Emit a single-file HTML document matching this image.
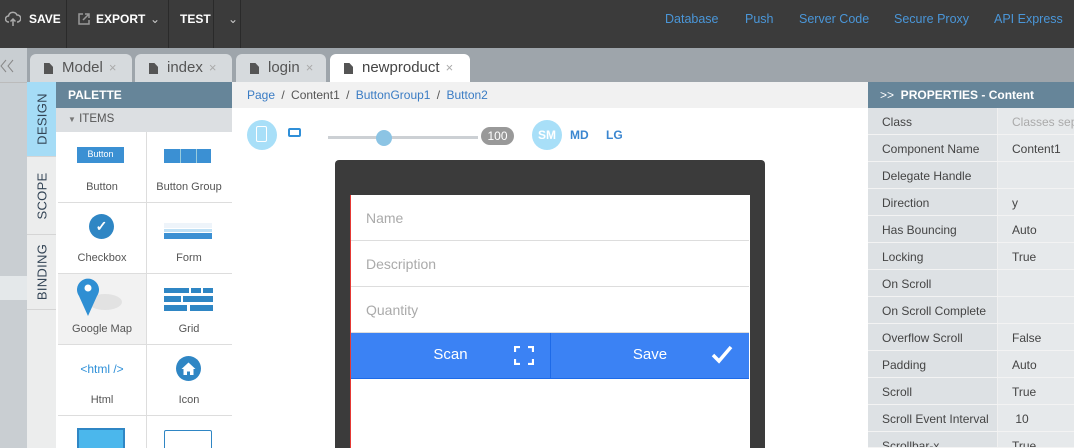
<!DOCTYPE html>
<html><head><meta charset="utf-8"><style>
*{box-sizing:border-box;margin:0;padding:0}
html{width:1074px;height:448px;overflow:hidden}
body{width:1074px;height:448px;overflow:hidden;font-family:"Liberation Sans",sans-serif;background:#fff;position:relative}
.a{position:absolute}
.top{left:0;top:0;width:1074px;height:48px;background:#3b3b3b;color:#fff;font-size:12px;font-weight:bold}
.top span{position:absolute;top:12px}
.sep{position:absolute;top:0;width:1px;height:48px;background:#2a2a2a}
.lnk{color:#4a96d8;font-weight:normal;font-size:12.5px}
.tab{top:54px;height:28px;background:#d6dadd;border-radius:6px 6px 0 0;font-size:15px;color:#555;padding:5px 0 0 32px}
.tab i{font-style:normal;color:#aaa;font-size:13px;margin-left:6px}
.doc{position:absolute;left:14px;top:9px;width:9px;height:11px;background:#555;clip-path:polygon(0 0,60% 0,100% 35%,100% 100%,0 100%)}
.vt{left:27px;width:29px;background:#eceded;border-bottom:1px solid #d5d5d5}
.vt span{position:absolute;left:50%;top:50%;transform:translate(-50%,-50%) rotate(-90deg);font-size:13px;color:#345;letter-spacing:.3px;white-space:nowrap}
.cell{width:89px;height:71px;border-right:1px solid #ddd;border-bottom:1px solid #ddd;font-size:11px;color:#555;text-align:center}
.cell b{font-weight:normal;position:absolute;left:0;right:0;top:49px}
.pr{left:868px;width:206px;height:27px;border-bottom:1px solid #f3f3f3;font-size:12px;color:#444}
.pr .l{position:absolute;left:0;top:0;width:130px;height:26px;background:#dde1e4;padding:7px 0 0 14px;border-right:1px solid #f0f0f0}
.pr .v{position:absolute;left:130px;top:0;width:76px;height:26px;background:#e6e9eb;padding:7px 0 0 14px;white-space:nowrap;overflow:hidden}
.fld{left:351px;width:398px;height:46px;border-bottom:1px solid #ddd;font-size:14px;color:#aaa;padding:15px 0 0 15px}
</style></head><body>
<div class="a top">
<svg class="a" style="left:5px;top:11px" width="16" height="16" viewBox="0 0 16 16"><path d="M4 11H3.5a3 3 0 0 1 0-6 4.5 4.5 0 0 1 8.5-1 3.5 3.5 0 0 1 .5 7H12" fill="none" stroke="#aaa" stroke-width="1.5"/><path d="M8 15V8M5.5 10.5 8 8l2.5 2.5" fill="none" stroke="#aaa" stroke-width="1.5"/></svg>
<span style="left:29px">SAVE</span><div class="sep" style="left:66px"></div>
<svg class="a" style="left:78px;top:13px" width="12" height="12" viewBox="0 0 12 12"><path d="M5 1H1v10h10V7" fill="none" stroke="#999" stroke-width="1.5"/><path d="M7 1h4v4M11 1 5 7" fill="none" stroke="#999" stroke-width="1.5"/></svg>
<span style="left:96px">EXPORT</span><span style="left:150px;font-weight:normal;color:#ccc">&#8964;</span>
<div class="sep" style="left:168px"></div><span style="left:180px">TEST</span><div class="sep" style="left:213px"></div>
<span style="left:228px;font-weight:normal;color:#ccc">&#8964;</span><div class="sep" style="left:240px"></div>
<span class="lnk" style="left:665px">Database</span><span class="lnk" style="left:745px">Push</span><span class="lnk" style="left:799px">Server Code</span><span class="lnk" style="left:894px">Secure Proxy</span><span class="lnk" style="left:994px">API Express</span>
</div>
<div class="a" style="left:0;top:48px;width:1074px;height:34px;background:#9ea5ab"></div>
<div class="a" style="left:0;top:48px;width:27px;height:400px;background:#c9ced2"></div>
<div class="a" style="left:0;top:82px;width:27px;height:1px;background:#bbb"></div>
<div class="a" style="left:0;top:276px;width:27px;height:24px;background:#e4e8ea"></div>
<svg class="a" style="left:0;top:59px" width="14" height="14" viewBox="0 0 14 14" fill="none" stroke="#888" stroke-width="1"><path d="M6 1 1 7l5 6M13 1 8 7l5 6"/></svg>
<div class="a tab" style="left:30px;width:102px"><div class="doc"></div>Model<i>×</i></div>
<div class="a tab" style="left:135px;width:97px"><div class="doc"></div>index<i>×</i></div>
<div class="a tab" style="left:236px;width:90px"><div class="doc"></div>login<i>×</i></div>
<div class="a tab" style="left:330px;width:140px;background:#fff;color:#444"><div class="doc"></div>newproduct<i>×</i></div>
<div class="a vt" style="top:82px;height:75px;background:#a5dcf6"><span>DESIGN</span></div>
<div class="a vt" style="top:157px;height:78px"><span>SCOPE</span></div>
<div class="a vt" style="top:235px;height:75px"><span>BINDING</span></div>
<div class="a vt" style="top:310px;height:138px;border:none"></div>
<div class="a" style="left:56px;top:82px;width:176px;height:26px;background:#668599;color:#fff;font-weight:bold;font-size:12px;padding:6px 0 0 12px">PALETTE</div>
<div class="a" style="left:56px;top:108px;width:176px;height:24px;background:#dcdfe2;color:#555;font-size:11.5px;padding:5px 0 0 12px"><span style="font-size:8px;color:#777">&#9660;</span> ITEMS</div>
<div class="a" style="left:56px;top:132px;width:176px;height:316px;background:#fff;overflow:hidden">
<div class="a cell" style="left:2px;top:0"><div class="a" style="left:19px;top:15px;width:47px;height:16px;background:#3b90d3;color:#fff;font-size:9px;padding-top:2px">Button</div><b>Button</b></div>
<div class="a cell" style="left:90px;top:0;width:87px"><div class="a" style="left:18px;top:17px;width:47px;height:14px;background:#3b90d3"></div><div class="a" style="left:34px;top:17px;width:1px;height:14px;background:#9cd"></div><div class="a" style="left:50px;top:17px;width:1px;height:14px;background:#9cd"></div><b>Button Group</b></div>
<div class="a cell" style="left:2px;top:71px"><div class="a" style="left:31px;top:11px;width:25px;height:25px;border-radius:50%;background:#2f86c4;color:#fff;font-size:14px;line-height:25px;font-weight:bold">&#10003;</div><b>Checkbox</b></div>
<div class="a cell" style="left:90px;top:71px;width:87px"><div class="a" style="left:18px;top:20px;width:48px;height:5px;background:#eef4fa"></div><div class="a" style="left:18px;top:26px;width:48px;height:3px;background:#bfe0f5"></div><div class="a" style="left:18px;top:30px;width:48px;height:6px;background:#3b90d3"></div><b>Form</b></div>
<div class="a cell" style="left:2px;top:142px;background:#f2f2f2"><div class="a" style="left:30px;top:20px;width:34px;height:16px;border-radius:50%;background:#e2e2e2"></div><svg class="a" style="left:19px;top:4px" width="22" height="38" viewBox="0 0 22 38"><path d="M11 38 2 18A11 11 0 1 1 20 18Z" fill="#2f8fd3"/><circle cx="11" cy="10" r="3.5" fill="#fff"/></svg><b>Google Map</b></div>
<div class="a cell" style="left:90px;top:142px;width:87px"><svg class="a" style="left:18px;top:14px" width="49" height="23"><g fill="#2f86c4"><rect x="0" y="0" width="25" height="5"/><rect x="27" y="0" width="10" height="5"/><rect x="39" y="0" width="10" height="5"/><rect x="0" y="8" width="17" height="6"/><rect x="19" y="8" width="30" height="6"/><rect x="0" y="17" width="23" height="6"/><rect x="26" y="17" width="23" height="6"/></g></svg><b>Grid</b></div>
<div class="a cell" style="left:2px;top:213px"><div class="a" style="left:0;right:0;top:17px;color:#2f90d8;font-size:12px">&lt;html /&gt;</div><b>Html</b></div>
<div class="a cell" style="left:90px;top:213px;width:87px"><svg class="a" style="left:30px;top:11px" width="25" height="25"><circle cx="12.5" cy="12.5" r="12.5" fill="#2f86c4"/><path d="M5.5 13 12.5 6.5 19.5 13H17.5V19H14V15.5H11V19H7.5V13Z" fill="#fff"/></svg><b>Icon</b></div>
<div class="a cell" style="left:2px;top:284px;border-bottom:none"><div class="a" style="left:19px;top:12px;width:48px;height:30px;background:#4bb7ec;border:2px solid #2f86c4"></div></div>
<div class="a cell" style="left:90px;top:284px;width:87px;border-bottom:none"><div class="a" style="left:18px;top:14px;width:48px;height:30px;border:1px solid #2f86c4;border-radius:2px"></div></div>
</div>
<div class="a" style="left:232px;top:82px;width:636px;height:26px;background:#f1f1f1;font-size:12px;color:#555;padding:6px 0 0 15px;word-spacing:3px"><span style="color:#3a7cc4">Page</span> / Content1 / <span style="color:#3a7cc4">ButtonGroup1</span> / <span style="color:#3a7cc4">Button2</span></div>
<div class="a" style="left:247px;top:120px;width:30px;height:30px;border-radius:50%;background:#a8dff8"></div>
<div class="a" style="left:256px;top:126px;width:11px;height:16px;border:1.5px solid #fff;border-radius:2px"></div>
<div class="a" style="left:288px;top:128px;width:13px;height:9px;border:2px solid #2f8fd8;border-radius:2px"></div>
<div class="a" style="left:328px;top:136px;width:150px;height:3px;background:#ccd0d4"></div>
<div class="a" style="left:376px;top:130px;width:16px;height:16px;border-radius:50%;background:#8cc4e4"></div>
<div class="a" style="left:481px;top:127px;width:33px;height:18px;border-radius:9px;background:#999;color:#fff;font-size:12px;text-align:center;padding-top:2px">100</div>
<div class="a" style="left:532px;top:120px;width:30px;height:30px;border-radius:50%;background:#a8dff8;color:#fff;font-weight:bold;font-size:12px;text-align:center;padding-top:8px">SM</div>
<div class="a" style="left:570px;top:128px;color:#3a86d0;font-weight:bold;font-size:12px">MD</div>
<div class="a" style="left:606px;top:128px;color:#3a86d0;font-weight:bold;font-size:12px">LG</div>
<div class="a" style="left:335px;top:160px;width:430px;height:288px;background:#3b3b3b;border-radius:4px 4px 0 0"></div>
<div class="a" style="left:350px;top:195px;width:400px;height:253px;background:#fff;border-left:1px solid #e53935"></div>
<div class="a fld" style="top:195px">Name</div>
<div class="a fld" style="top:241px">Description</div>
<div class="a fld" style="top:287px">Quantity</div>
<div class="a" style="left:351px;top:333px;width:398px;height:46px;background:#3b82f4;border-bottom:1px solid #1d6ae8;color:#fff;font-size:15px">
<div class="a" style="left:0;width:199px;top:13px;text-align:center">Scan</div>
<svg class="a" style="left:163px;top:13px" width="20" height="19" viewBox="0 0 20 19" fill="none" stroke="#fff" stroke-width="2.2"><path d="M1 6V1h5M14 1h5v5M19 13v5h-5M6 18H1v-5"/></svg>
<div class="a" style="left:199px;top:0;width:1px;height:45px;background:#1d6ae8"></div>
<div class="a" style="left:200px;width:198px;top:13px;text-align:center">Save</div>
<svg class="a" style="left:360px;top:12px" width="22" height="20" viewBox="0 0 22 20" fill="none" stroke="#fff" stroke-width="3.5"><path d="M2 10l6 6L20 2"/></svg>
</div>
<div class="a" style="left:868px;top:82px;width:206px;height:26px;background:#668599;color:#fff;font-weight:bold;font-size:12px;padding:6px 0 0 12px"><span style="font-weight:normal">&gt;&gt;</span>&nbsp; PROPERTIES - Content</div>
<div class="a pr" style="top:108px"><div class="l">Class</div><div class="v" style="color:#aaa">Classes sep</div></div>
<div class="a pr" style="top:135px"><div class="l">Component Name</div><div class="v">Content1</div></div>
<div class="a pr" style="top:162px"><div class="l">Delegate Handle</div><div class="v"></div></div>
<div class="a pr" style="top:189px"><div class="l">Direction</div><div class="v">y</div></div>
<div class="a pr" style="top:216px"><div class="l">Has Bouncing</div><div class="v">Auto</div></div>
<div class="a pr" style="top:243px"><div class="l">Locking</div><div class="v">True</div></div>
<div class="a pr" style="top:270px"><div class="l">On Scroll</div><div class="v"></div></div>
<div class="a pr" style="top:297px"><div class="l">On Scroll Complete</div><div class="v"></div></div>
<div class="a pr" style="top:324px"><div class="l">Overflow Scroll</div><div class="v">False</div></div>
<div class="a pr" style="top:351px"><div class="l">Padding</div><div class="v">Auto</div></div>
<div class="a pr" style="top:378px"><div class="l">Scroll</div><div class="v">True</div></div>
<div class="a pr" style="top:405px"><div class="l">Scroll Event Interval</div><div class="v">&nbsp;10</div></div>
<div class="a pr" style="top:432px;height:16px;overflow:hidden"><div class="l">Scrollbar-x</div><div class="v">True</div></div>
</body></html>
